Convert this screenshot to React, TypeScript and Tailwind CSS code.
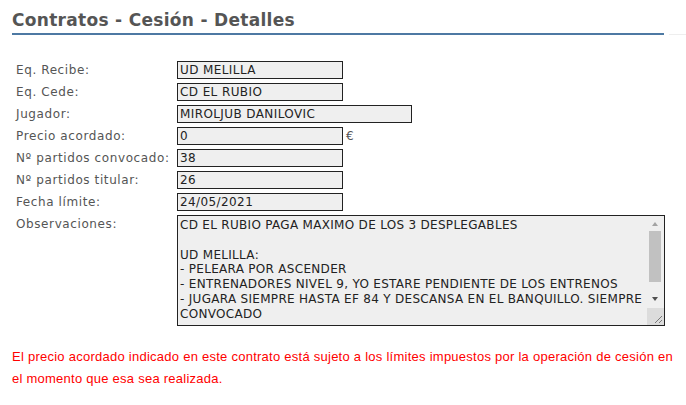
const rows: { label: string; value: string; wide?: boolean; euro?: boolean }[] = [
  { label: "Eq. Recibe:", value: "UD MELILLA" },
  { label: "Eq. Cede:", value: "CD EL RUBIO" },
  { label: "Jugador:", value: "MIROLJUB DANILOVIC", wide: true },
  { label: "Precio acordado:", value: "0", euro: true },
  { label: "Nº partidos convocado:", value: "38" },
  { label: "Nº partidos titular:", value: "26" },
  { label: "Fecha límite:", value: "24/05/2021" },
]

const obs = `CD EL RUBIO PAGA MAXIMO DE LOS 3 DESPLEGABLES

UD MELILLA:
- PELEARA POR ASCENDER
- ENTRENADORES NIVEL 9, YO ESTARE PENDIENTE DE LOS ENTRENOS
- JUGARA SIEMPRE HASTA EF 84 Y DESCANSA EN EL BANQUILLO. SIEMPRE CONVOCADO`

const App = () => {
  return (
    <div className="w-[686px] h-[405px] bg-white pl-3 pt-[9px] font-['DejaVu_Sans',sans-serif] text-[12px]">
      <div className="flex items-end">
        <div className="w-[652px] border-b-2 border-[#4d79a3] pb-[2px]">
          <h1 className="text-[17px] font-bold leading-[22px] text-[#555555] tracking-[0.3px]">
            Contratos - Cesión - Detalles
          </h1>
        </div>
        <div className="ml-[5px] w-[17px] border-b border-[#eeeeee]"></div>
      </div>

      <div className="mt-[26px] flex flex-col gap-1 pl-1">
        {rows.map((row, index) => (
          <div className="flex items-center" key={index}>
            <div className="w-[161px] text-[#555555] leading-[18px] tracking-[0.6px]">{row.label}</div>
            <div
              className={`${row.wide ? "w-[235px]" : "w-[166px]"} h-[18px] border border-[#222222] bg-[#efefef] px-[2px] leading-[16px] text-[#222222] tracking-[0.4px]`}
            >
              {row.value}
            </div>
            {row.euro && <span className="ml-[3px] text-[#555555]">€</span>}
          </div>
        ))}
        <div className="flex items-start">
          <div className="w-[161px] text-[#555555] leading-[18px] tracking-[0.6px]">Observaciones:</div>
          <div className="relative w-[488px] h-[111px] border border-[#222222] bg-[#efefef]">
            <textarea
              readOnly
              value={obs}
              className="block w-[470px] h-[109px] bg-transparent px-[2px] pt-[2px] leading-[14.8px] text-[#222222] tracking-[0.3px] overflow-hidden resize-none font-['DejaVu_Sans',sans-serif] text-[12px] outline-none"
            />
            {/* fake scrollbar */}
            <div className="absolute right-[2px] top-0 flex h-[92px] w-[14px] flex-col items-center">
              <div className="flex h-[15px] items-center justify-center">
                <div className="h-0 w-0 border-x-[3.5px] border-b-[4px] border-x-transparent border-b-[#a3a3a3]"></div>
              </div>
              <div className="h-[51px] w-[12px] bg-[#c1c1c1]"></div>
              <div className="flex flex-1 items-end justify-center pb-[7px]">
                <div className="h-0 w-0 border-x-[3.5px] border-t-[4px] border-x-transparent border-t-[#505050]"></div>
              </div>
            </div>
            <div className="absolute bottom-0 right-0 h-[17px] w-[17px] bg-[#dcdcdc]">
              <svg width="17" height="17" viewBox="0 0 17 17" className="absolute inset-0">
                <line x1="15" y1="8" x2="8" y2="15" stroke="#7a7a7a" strokeWidth="1" />
                <line x1="15" y1="12" x2="12" y2="15" stroke="#7a7a7a" strokeWidth="1" />
              </svg>
            </div>
          </div>
        </div>
      </div>

      <p className="mt-[20px] w-[661px] text-justify font-['Liberation_Sans',Arial,sans-serif] text-[13px] leading-[22px] tracking-[0.25px] text-[#ff0000]">
        El precio acordado indicado en este contrato está sujeto a los límites impuestos por la operación de cesión en el momento que esa sea realizada.
      </p>
    </div>
  )
}

export default App
